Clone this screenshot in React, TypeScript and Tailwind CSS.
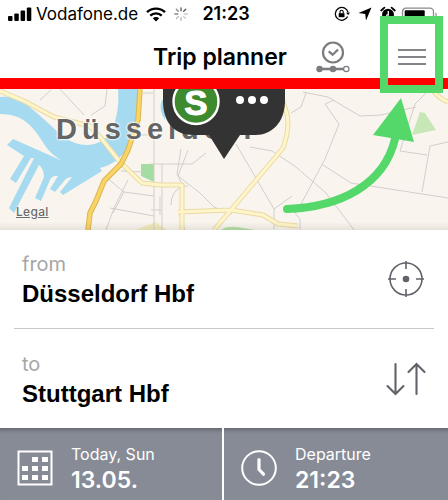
import type { ReactNode } from "react";

const StatusBar = () => (
    <div className="grid h-7 grid-cols-[1fr_auto_1fr] items-center pl-2 pr-1 text-black">
        <div className="flex items-center">
            <svg width="24" height="14" viewBox="0 0 24 14" fill="currentColor" className="shrink-0">
                <rect x="0" y="9" width="4.5" height="5" rx="1" />
                <rect x="6.3" y="6.5" width="4.5" height="7.5" rx="1" />
                <rect x="12.6" y="3.5" width="4.5" height="10.5" rx="1" />
                <rect x="18.8" y="0.5" width="4.5" height="13.5" rx="1" />
            </svg>
            <span className="ml-1 text-[17px] leading-5">Vodafone.de</span>
            <svg width="20" height="15" viewBox="0 0 20 15" fill="none" stroke="currentColor" strokeWidth="2.4" className="ml-2 shrink-0">
                <path d="M1 5.2a13 13 0 0 1 18 0" />
                <path d="M4.3 8.7a8.2 8.2 0 0 1 11.4 0" />
                <path d="M10 14.5 6.8 11.2a4.6 4.6 0 0 1 6.4 0z" fill="currentColor" stroke="none" />
            </svg>
            <svg width="14" height="14" viewBox="0 0 14 14" stroke="#555" strokeWidth="1.3" strokeLinecap="round" className="ml-2 shrink-0">
                <path d="M7 .8v3M9.7 4.3l2-2" />
                <path d="M10.3 7h3M9.5 9.5l1.8 1.8" opacity=".3" />
                <path d="M7 10.3v3M4.4 9.6l-2 2" opacity=".45" />
                <path d="M.8 7h3M4.3 4.3l-2-2" opacity=".7" />
            </svg>
        </div>
        <span className="text-[18px] font-semibold leading-5">21:23</span>
        <div className="flex items-center justify-end pr-1.5">
            <svg width="16" height="16" viewBox="0 0 16 16" fill="none" stroke="currentColor" strokeWidth="1.3">
                <path d="M13.6 10.5A6.4 6.4 0 1 1 14 6.4" />
                <path d="m12 6.7 2.2 2.3 1.8-2.6z" fill="currentColor" stroke="none" />
                <rect x="4.7" y="7.2" width="5.8" height="4" fill="currentColor" stroke="none" />
                <path d="M6 7.4V5.8a1.6 1.6 0 0 1 3.2 0v1.6" strokeWidth="1.1" />
            </svg>
            <svg width="14" height="14" viewBox="0 0 14 14" fill="currentColor" className="ml-2">
                <path d="M13.5.5 8 13.5 7.2 7 .5 6z" />
            </svg>
            <svg width="16" height="16" viewBox="0 0 16 16" className="ml-2">
                <circle cx="8" cy="8.7" r="6" fill="currentColor" />
                <path d="M1.2 4.5 4.4 1.6M14.8 4.5l-3.2-2.9" stroke="currentColor" strokeWidth="1.8" strokeLinecap="round" />
                <path d="M8.3 5v4.2H6" stroke="#fff" strokeWidth="1.3" fill="none" />
            </svg>
            <svg width="38" height="15" viewBox="0 0 38 15" className="ml-1">
                <rect x="2.5" y="1.2" width="31" height="13" rx="3.5" fill="none" stroke="#8a8a8a" strokeWidth="1.3" />
                <rect x="4.7" y="3.3" width="20" height="8.8" rx="1" fill="currentColor" />
                <path d="M35.5 5.3c1.8.8 1.8 4 0 4.8z" fill="#8a8a8a" />
            </svg>
        </div>
    </div>
);

const Header = () => (
    <header className="grid h-[61px] grid-cols-[1fr_auto_1fr] items-center border-b-[11px] border-[#fe0000] bg-white pr-2">
        <h1 className="col-start-2 pt-2 text-[23px] font-semibold leading-7 text-black">Trip planner</h1>
        <div className="flex items-center justify-end gap-12 pr-3.5 pt-2">
            <button type="button" aria-label="Recent trips">
                <svg width="34" height="32" viewBox="0 0 34 32" fill="none" stroke="#7c7c80">
                    <circle cx="17" cy="11.5" r="10" strokeWidth="2.2" />
                    <path d="m12.7 10.3 4 3.4 5.3-5.2" strokeWidth="2.2" />
                    <path d="M3 28h25" strokeWidth="2.6" />
                    <circle cx="3.5" cy="28" r="3.2" fill="#7c7c80" stroke="none" />
                    <circle cx="17" cy="28" r="3.2" fill="#7c7c80" stroke="none" />
                    <circle cx="30.3" cy="28" r="2.7" fill="#fff" strokeWidth="1.2" />
                </svg>
            </button>
            <button type="button" aria-label="Menu" className="flex w-7 flex-col gap-[5px]">
                <span className="h-0.5 bg-[#858589]" />
                <span className="h-0.5 bg-[#858589]" />
                <span className="h-0.5 bg-[#858589]" />
            </button>
        </div>
    </header>
);

const CityMap = () => (
    <section aria-label="Map" className="relative h-[141px] overflow-hidden bg-[#f9f5ee]">
        <svg viewBox="0 0 448 141" preserveAspectRatio="xMidYMid slice" className="h-full w-full" fill="none">
            {/* water */}
            <g fill="#a6daf1">
                <path d="M0 8C10 7 18 10 24 14C38 24 50 36 60 45C72 56 90 60 103 51C113 44 120 25 118 0H137C139 22 137 42 129 56C121 71 111 76 100 79L102 82L63 106L60 103L72 88Q67 88 64 92L55 103L50 100L58 87Q53 86 50 91L41 112L35 109L44 88Q44 80 39 76L14 124L9 119L34 69H31L16 94L10 90L24 67L7 56L13 50L38 61L78 79C60 72 52 66 46 58C34 39 25 25 0 25z" />
                <path d="M162 11q-4 10 3 20v-20z" />
            </g>
            {/* parks */}
            <path d="M141 75h13v18l-13-6z" fill="#a5dca1" />
            <path d="m420 23 5 1 11 17-24 5z" fill="#c8e7b7" />
            <path d="M221 141q5-4 16-3l18 3z" fill="#b6e2a5" />
            <path d="m136 141 19-8 12 8z" fill="#f2eabc" />
            {/* minor streets */}
            <g stroke="#d3cecb" strokeWidth="1">
                <path d="M40 11 51 1M60 0l24 26M107 0l-2 17-14 9M121 82l22 1M154 0v141M128 91l-14 28-8 22M107 89l17 14 30 4M110 119l44 8M124 103l-11 21M162 75v66M154 97h34M150 75h42l14-11M181 60l-4 25 7 14M188 61l-10 26 22 17 14 14 18 7M236 55l38 65v20M274 120l18-13M250 58l22 4 24 16 30 26 32 42M151 121h10M160 107v19M185 141l-6-16" />
                <path d="M306 4l-5 14-10 6M303 3l25 5 32 19 21-1 35-8M334 11l-9 4 14 20-14 35-24 45M323 76l28 18 97 15M415 15l-15 47 27 4M448 53l-18 4-8 46M415 15l12-12M291 119l9 11v11M153 4h-10M137 46h17M181 98q-10 5-10 18" />
            </g>
            {/* major roads */}
            <g strokeLinejoin="round">
                <g stroke="#ead9a4" strokeWidth="5">
                    <path d="M0 2 24 12 54 28 90 37 101 49 120 73 142 94 160 96H182V141M178 123 231 121 263 126 278 135 298 137M214 141 231 121 283 59Q290 40 287 25L279 0M432 0q7 10 16 13" />
                </g>
                <g stroke="#fff5ca" strokeWidth="3">
                    <path d="M0 2 24 12 54 28 90 37 101 49 120 73 142 94 160 96H182V141M178 123 231 121 263 126 278 135 298 137M214 141 231 121 283 59Q290 40 287 25L279 0M432 0q7 10 16 13" />
                </g>
                <path d="M140 0 138 31 128 61 121 75 104 92 96 112 90 124 88 141" stroke="#d9b653" strokeWidth="5.5" />
                <path d="M140 0 138 31 128 61 121 75 104 92 96 112 90 124 88 141" stroke="#fad365" strokeWidth="3.5" />
            </g>
        </svg>
        <span className="absolute left-[56px] top-6 text-[29px] font-bold leading-8 tracking-[5px] text-[#656565] [font-family:'Liberation_Sans',Arial,sans-serif] [text-shadow:0_0_2px_#fff,0_0_2px_#fff,0_0_3px_#fff]">
            Düsseldorf
        </span>
        <a href="#legal" className="absolute bottom-2.5 left-4 text-[12px] font-medium leading-4 tracking-wide text-[#6b6b6b] underline [text-shadow:0_0_2px_#fff]">
            Legal
        </a>
        {/* station callout */}
        <div className="absolute left-[163px] top-0">
            <svg width="123" height="71" viewBox="0 0 123 71" className="block">
                <path d="M0 0h122v12c0 22-14 34-29 34H77L61 70 46 46H30C12 46 0 34 0 12z" fill="#333" />
                <circle cx="33" cy="12.5" r="22.5" fill="#3e8a2e" stroke="#fff" strokeWidth="2.4" />
                <circle cx="77" cy="11" r="4" fill="#fff" />
                <circle cx="89" cy="11" r="4" fill="#fff" />
                <circle cx="101" cy="11" r="4" fill="#fff" />
                <text x="33" y="26" textAnchor="middle" fontSize="35" fontWeight="700" fill="#fff" stroke="#fff" strokeWidth="1" fontFamily="Liberation Sans, Arial, sans-serif">
                    S
                </text>
            </svg>
        </div>
        <div className="absolute inset-x-0 bottom-0 h-2 bg-gradient-to-t from-black/8 to-transparent" />
    </section>
);

type StopFieldProps = {
    id: string;
    label: string;
    value: string;
    action: string;
    icon: ReactNode;
};

const StopField = ({ id, label, value, action, icon }: StopFieldProps) => (
    <div className="flex h-[99px] items-center justify-between pl-2 pr-2">
        <div className="flex min-w-0 flex-1 flex-col pt-0.5">
            <label htmlFor={id} className="text-[20px] leading-7 text-[#a6a6a6]">
                {label}
            </label>
            <input
                id={id}
                defaultValue={value}
                className="h-8 w-full bg-transparent text-[24px] font-bold text-black outline-none [font-family:'Liberation_Sans',Arial,sans-serif]"
            />
        </div>
        <button type="button" aria-label={action}>
            {icon}
        </button>
    </div>
);

const TripForm = () => (
    <form className="divide-y divide-[#c8c8c8] bg-white px-3.5">
        <StopField
            id="from"
            label="from"
            value="Düsseldorf Hbf"
            action="Use my location"
            icon={
                <svg width="40" height="38" viewBox="0 0 40 38" fill="none" stroke="#62626a" strokeWidth="1.6">
                    <circle cx="20" cy="19" r="16" />
                    <path d="M20 1v8M20 29v8M2 19h8M30 19h8" />
                    <circle cx="20" cy="19" r="3.3" fill="#62626a" stroke="none" />
                </svg>
            }
        />
        <StopField
            id="to"
            label="to"
            value="Stuttgart Hbf"
            action="Swap stations"
            icon={
                <svg width="40" height="34" viewBox="0 0 40 34" fill="none" stroke="#62626a" strokeWidth="2.1" strokeLinecap="round">
                    <path d="M9.5 2v30M1.5 24l8 8 8-8" />
                    <path d="M30.5 32V2M22.5 10l8-8 8 8" />
                </svg>
            }
        />
    </form>
);

const CalendarIcon = () => (
    <svg width="36" height="36" viewBox="0 0 36 36" className="shrink-0">
        <rect x="1.5" y="1.5" width="33" height="33" fill="none" stroke="#fff" strokeWidth="2" />
        <path
            d="M15 7h6v5h-6zM25 7h6v5h-6zM5 16h6v5H5zM15 16h6v5h-6zM25 16h6v5h-6zM5 25h6v5H5zM15 25h6v5h-6zM25 25h6v5h-6z"
            fill="#fff"
        />
    </svg>
);

const ClockIcon = () => (
    <svg width="36" height="36" viewBox="0 0 36 36" fill="none" stroke="#fff" className="shrink-0">
        <circle cx="18" cy="18" r="16.8" strokeWidth="2" />
        <path d="M18 9.5v10l4.5 4.7" strokeWidth="3.2" strokeLinecap="round" strokeLinejoin="round" />
    </svg>
);

const times = [
    { label: "Today, Sun", value: "13.05.", icon: <CalendarIcon /> },
    { label: "Departure", value: "21:23", icon: <ClockIcon /> },
];

const App = () => {
    return (
        <div className="relative w-full overflow-hidden bg-white [font-family:Inter,sans-serif]">
            <StatusBar />
            <Header />
            <CityMap />
            <TripForm />
            <div className="grid h-18 grid-cols-2 divide-x-2 divide-white bg-[#878b96] text-white shadow-[inset_0_6px_4px_-4px_#62666f]">
                {times.map((item) => (
                    <button key={item.label} type="button" className="flex items-center gap-[18px] pl-[17px] pt-2 text-left">
                        {item.icon}
                        <span>
                            <span className="block text-[16px] leading-6">{item.label}</span>
                            <span className="block text-[23px] font-semibold leading-7">{item.value}</span>
                        </span>
                    </button>
                ))}
            </div>
            {/* callout marking the menu button */}
            <div className="pointer-events-none absolute right-[5px] top-4 h-[77px] w-[63px] border-8 border-[#55d86a]" />
            <svg width="134" height="120" viewBox="0 0 134 120" className="pointer-events-none absolute right-[31px] top-[97px]">
                <path d="M4 112C57 110 101 88 112 42" fill="none" stroke="#55d86a" strokeWidth="8" strokeLinecap="round" />
                <path d="m118 1 13 44-41-7z" fill="#55d86a" />
            </svg>
        </div>
    );
};

export default App;
